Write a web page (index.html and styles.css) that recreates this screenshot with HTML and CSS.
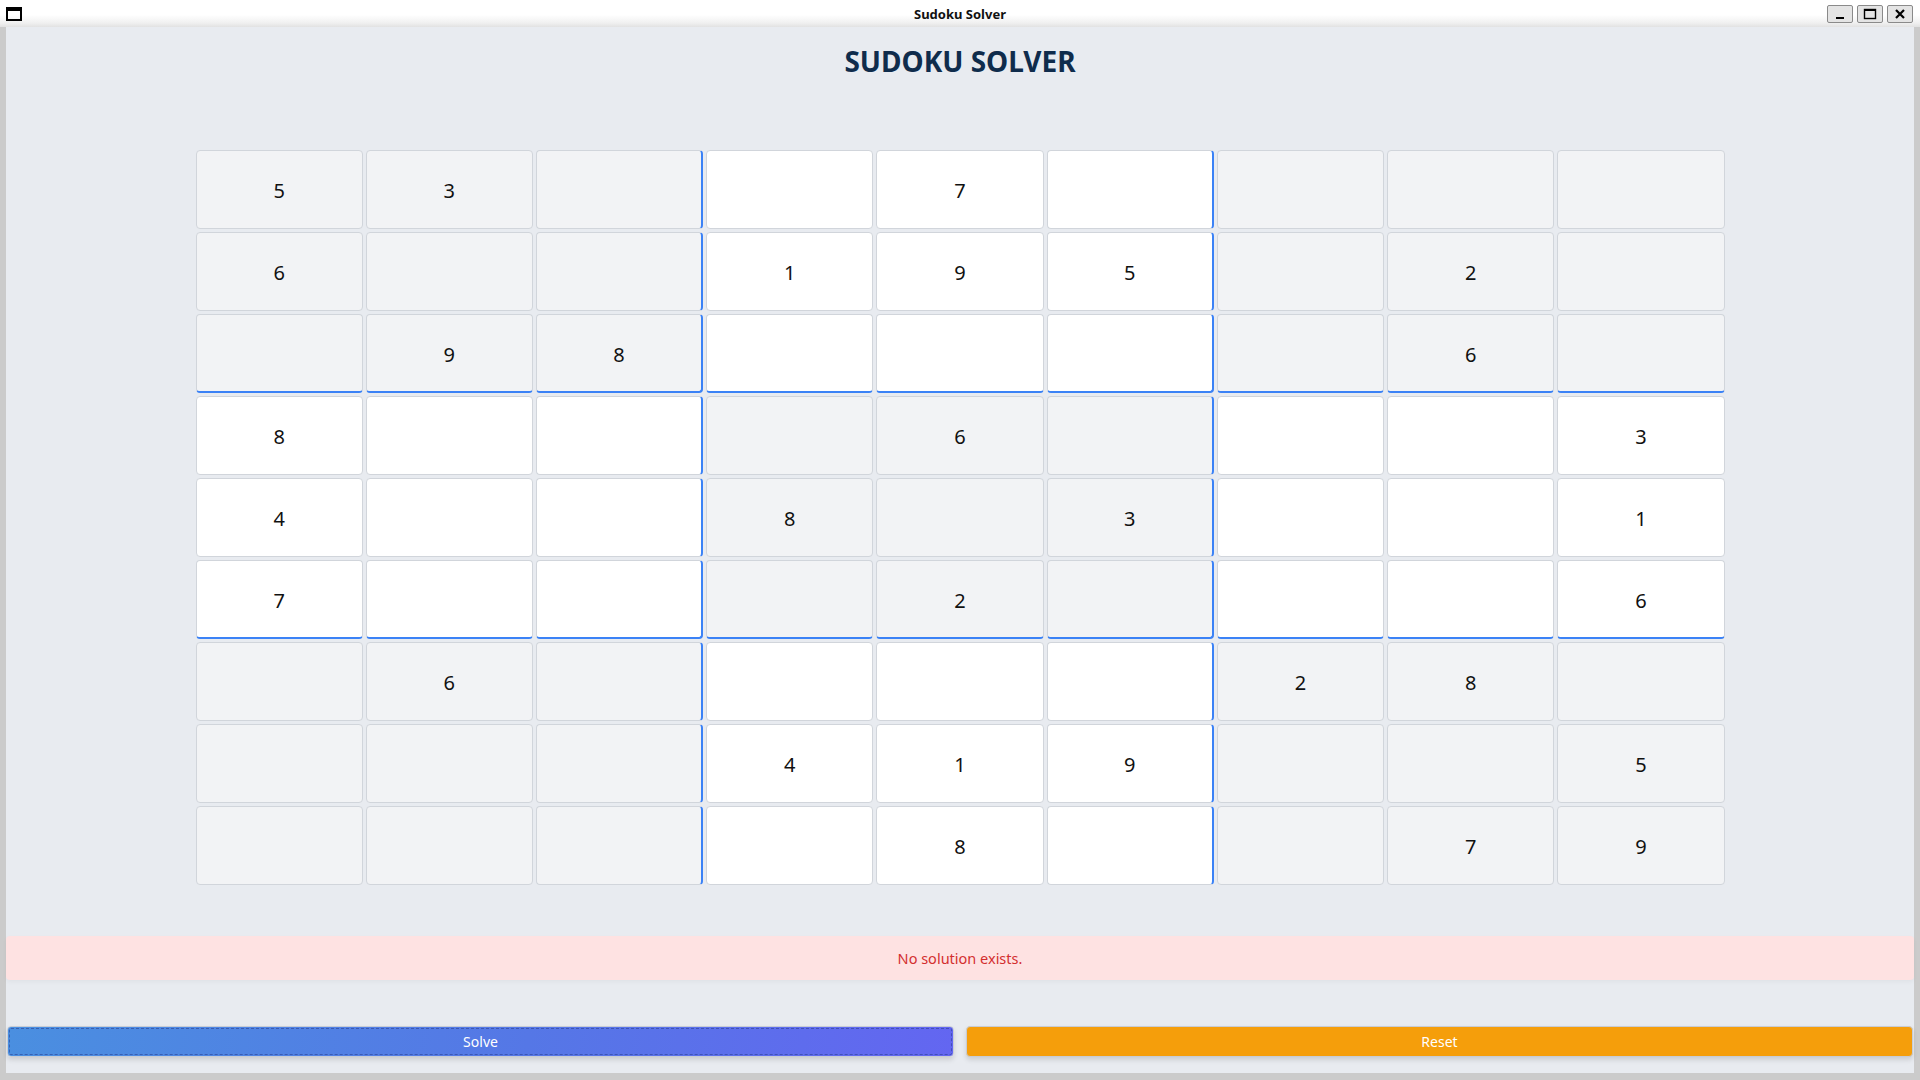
FILE: index.html
```html
<!DOCTYPE html>
<html lang="en">
<head>
<meta charset="utf-8">
<title>Sudoku Solver</title>
<link rel="stylesheet" href="styles.css">
</head>
<body>
<div class="window">
  <div class="titlebar">
    <svg class="app-icon" width="16" height="14" viewBox="0 0 16 14"><rect x="1" y="1" width="14" height="12" fill="none" stroke="#000" stroke-width="2"/><rect x="1" y="1" width="14" height="3" fill="#000"/></svg>
    <div class="title-text">Sudoku Solver</div>
    <div class="win-buttons">
      <div class="win-btn"><svg width="12" height="12" viewBox="0 0 12 12"><rect x="2" y="9" width="8" height="2" fill="#000"/></svg></div>
      <div class="win-btn"><svg width="14" height="12" viewBox="0 0 14 12"><rect x="1.5" y="1.5" width="11" height="9" fill="none" stroke="#000" stroke-width="1.4"/><rect x="1" y="1" width="12" height="2" fill="#000"/></svg></div>
      <div class="win-btn"><svg width="12" height="12" viewBox="0 0 12 12"><path d="M2 2 L10 10 M10 2 L2 10" stroke="#000" stroke-width="2.2"/></svg></div>
    </div>
  </div>
  <div class="frame">
    <main class="content">
      <h1 class="heading">SUDOKU SOLVER</h1>
      <div class="board" id="board"></div>
      <div class="message">No solution exists.</div>
      <div class="actions">
        <button class="btn btn-solve">Solve</button>
        <button class="btn btn-reset">Reset</button>
      </div>
    </main>
  </div>
</div>
<script src="app.js"></script>
</body>
</html>
```
FILE: app.js
```js
const puzzle = [
  "53..7....",
  "6..195.2.",
  ".98....6.",
  "8...6...3",
  "4..8.3..1",
  "7...2...6",
  ".6....28.",
  "...419..5",
  "....8..79"
];
const board = document.getElementById('board');
for (let r = 0; r < 9; r++) {
  for (let c = 0; c < 9; c++) {
    const cell = document.createElement('div');
    cell.className = 'cell';
    const box = Math.floor(r / 3) + Math.floor(c / 3);
    if (box % 2 === 0) cell.classList.add('shade');
    if (c === 2 || c === 5) cell.classList.add('edge-right');
    if (r === 2 || r === 5) cell.classList.add('edge-bottom');
    const ch = puzzle[r][c];
    cell.textContent = ch === '.' ? '' : ch;
    board.appendChild(cell);
  }
}
```
FILE: styles.css
```css
* { box-sizing: border-box; }
html, body { margin: 0; padding: 0; }
body {
  width: 1920px;
  height: 1080px;
  overflow: hidden;
  font-family: "Noto Sans", "Open Sans", sans-serif;
  background: #cbcbcb;
}
.window {
  display: flex;
  flex-direction: column;
  height: 1080px;
}
.titlebar {
  height: 27px;
  flex: none;
  display: flex;
  align-items: center;
  position: relative;
  background: linear-gradient(to bottom, #ffffff 0%, #ffffff 55%, #f0f0f0 85%, #e2e2e2 100%);
}
.app-icon {
  margin-left: 6px;
  margin-top: 1px;
}
.title-text {
  position: absolute;
  left: 0;
  right: 0;
  top: 6px;
  text-align: center;
  font-family: "Noto Sans", sans-serif;
  font-weight: 700;
  font-size: 13px;
  line-height: 16px;
  color: #111;
}
.win-buttons {
  margin-left: auto;
  margin-right: 7px;
  display: flex;
  gap: 4px;
  margin-top: 1px;
}
.win-btn {
  width: 26px;
  height: 18px;
  border: 1px solid #8a8a8a;
  border-radius: 2px;
  background: #e4e4e4;
  display: flex;
  align-items: center;
  justify-content: center;
}
.frame {
  flex: 1;
  padding: 0 6px 7px 6px;
  display: flex;
}
.content {
  flex: 1;
  background: #e8ebf0;
  display: flex;
  flex-direction: column;
  align-items: stretch;
}
.heading {
  margin: 16px 0 0;
  text-align: center;
  font-family: "Noto Sans", "Open Sans", sans-serif;
  font-weight: 700;
  font-size: 28px;
  line-height: 36px;
  color: #0f2c4c;
}
.board {
  width: 1529px;
  margin: 71px auto 0;
  display: grid;
  grid-template-columns: repeat(9, 1fr);
  grid-auto-rows: 79px;
  gap: 3px;
}
.cell {
  background: #ffffff;
  border: 1px solid #d1d5db;
  border-radius: 4px;
  display: flex;
  align-items: center;
  justify-content: center;
  font-size: 20px;
  color: #111111;
  padding-top: 2px;
}
.cell.shade { background: #f2f3f5; }
.cell.edge-right { border-right: 2px solid #3b82f6; }
.cell.edge-bottom { border-bottom: 2px solid #3b82f6; }
.message {
  margin-top: 51px;
  height: 44px;
  line-height: 44px;
  background: #fee2e2;
  border-radius: 4px;
  text-align: center;
  font-size: 14.5px;
  color: #d32f2f;
  box-shadow: 0 2px 4px rgba(0, 0, 0, 0.04);
}
.actions {
  margin-top: 46px;
  display: flex;
  gap: 12px;
  padding: 0 1px;
}
.btn {
  flex: 1;
  height: 31px;
  border: 1px solid #c8ccd4;
  border-radius: 4px;
  font-family: "Noto Sans", "Open Sans", sans-serif;
  font-size: 14px;
  color: #ffffff;
  box-shadow: 0 3px 5px rgba(0, 0, 0, 0.12);
  cursor: pointer;
}
.btn-solve {
  background: linear-gradient(100deg, #4a8fe0 0%, #5577e6 55%, #6366f1 100%);
  outline: 1px dashed rgba(40, 60, 140, 0.55);
  outline-offset: -3px;
}
.btn-reset {
  background: #f59e0b;
}
```
